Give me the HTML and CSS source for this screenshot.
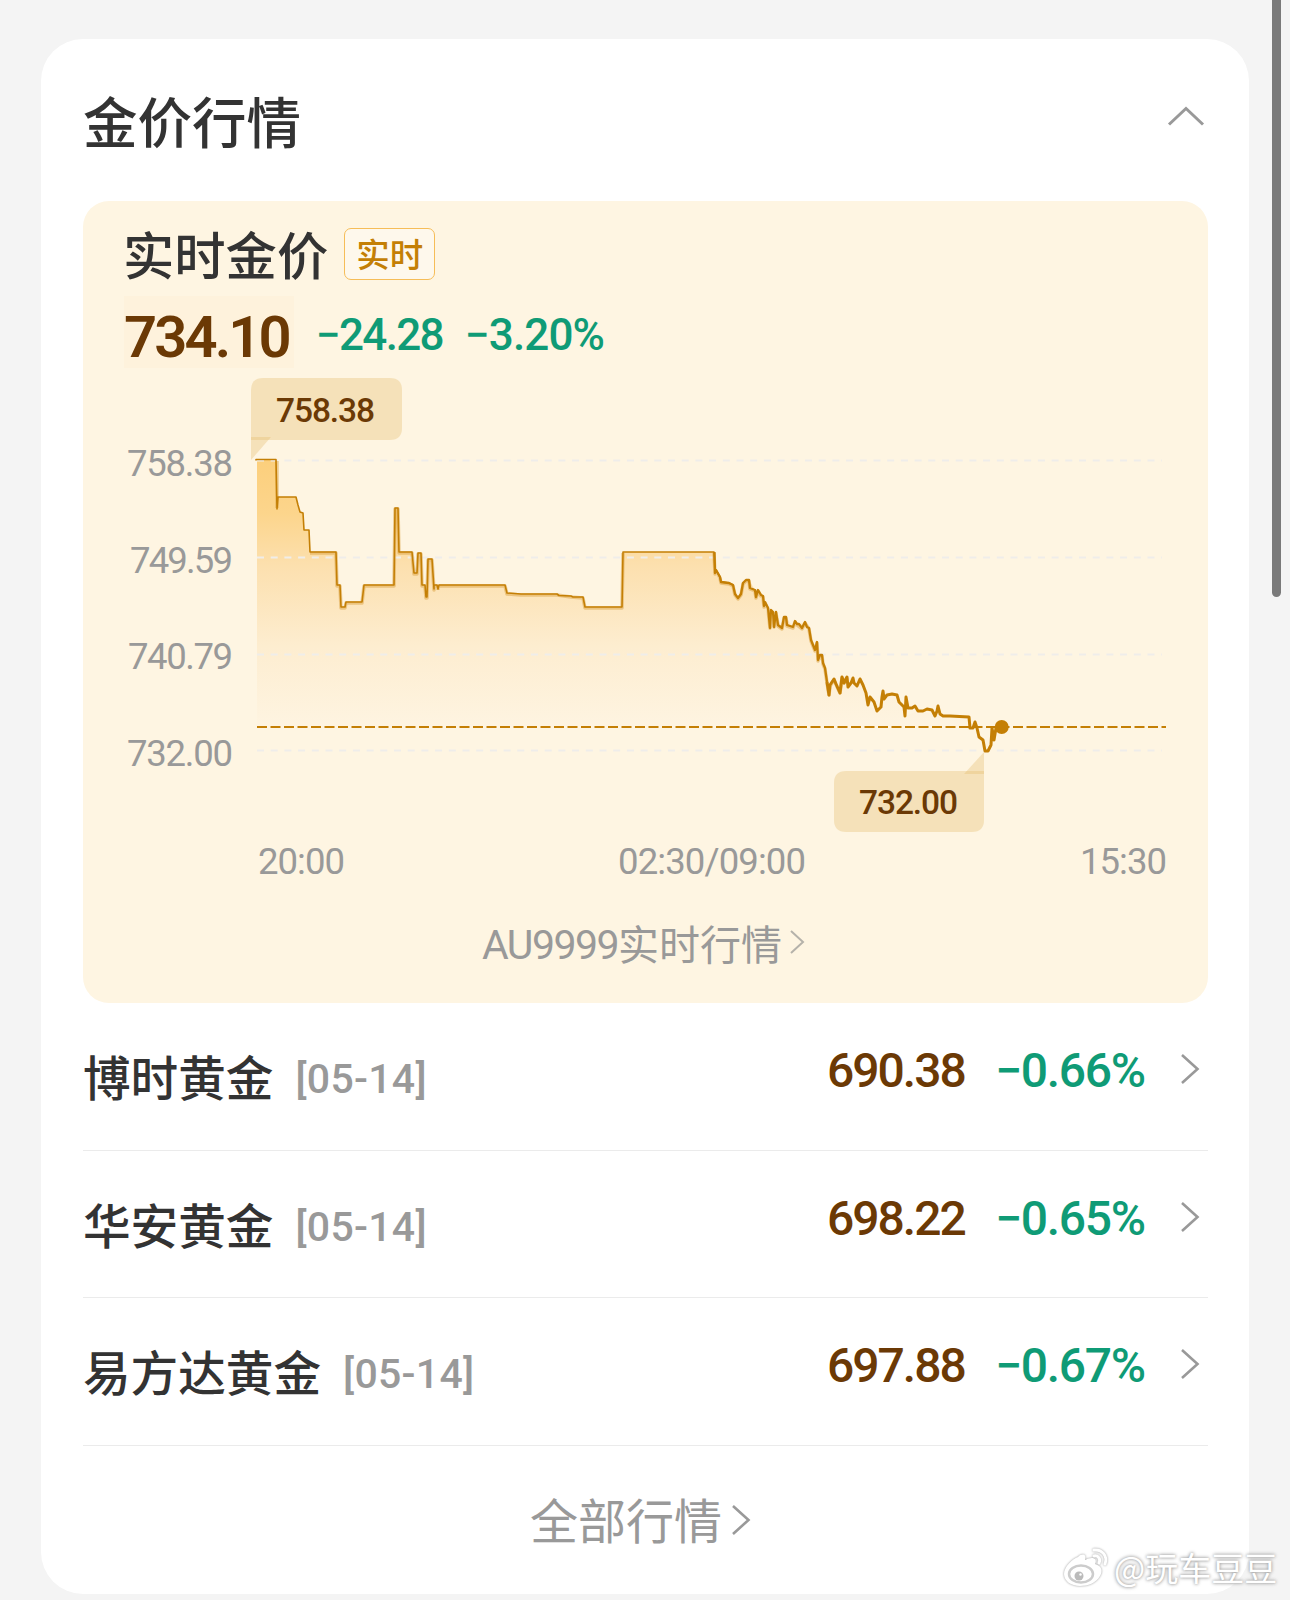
FILE: index.html
```
<!DOCTYPE html>
<html lang="zh-CN">
<head>
    <meta charset="UTF-8">
    <meta name="viewport" content="width=device-width, initial-scale=1.0">
    <title>金价行情</title>
    <link rel="stylesheet" href="styles.css">
</head>
<body>
    <div class="card">
        <div class="card-header">
            <h1>金价行情</h1>
            <svg class="arrow-up" width="40" height="24" viewBox="0 0 40 24">
                <path d="M3 21.500 L20 5.500 L37 21.500"/>
            </svg>
        </div>

        <div class="gold">
            <div class="gold-title">
                <h2>实时金价</h2>
                <span class="tag">实时</span>
            </div>
            <div class="gold-price">
                <span class="now">734.10</span>
                <span class="change">−24.28</span>
                <span class="percent">−3.20%</span>
            </div>

            <svg class="chart" width="1125" height="520" viewBox="83 370 1125 520">
                <defs>
                    <linearGradient id="area" gradientUnits="userSpaceOnUse" x1="0" y1="460" x2="0" y2="727">
                        <stop offset="0" stop-color="#fccf7c"/>
                        <stop offset="0.2" stop-color="#fcd58c"/>
                        <stop offset="0.4" stop-color="#fce0af"/>
                        <stop offset="0.7" stop-color="#fdedd0"/>
                        <stop offset="1" stop-color="#fef4e1"/>
                    </linearGradient>
                </defs>

                <!-- price area -->
                <path fill="url(#area)" d="M257 460 H276 L277 509 L278 497 H296 L300 512 L303 513 L304 530 H309 L310 552 H336 L337 585 H340 L341 607 H345 L346 602 H362 L364 585 H394 L395 508 H398 L399 552 H412 L414 573 H417 L418 553 H421 L422 585 H425 L426 597 L428 559 H432 L434 585 H505 L507 593 L521 594 H557 L571 596 L583 597 L585 607 H622 L623 552 H714 L715 573 L721 582 L733 585 L738 598 L743 583 L749 580 L755 590 L763 596 L770 628 L776 612 L782 628 L786 617 L793 627 L805 622 L811 640 L818 660 L825 668 L829 695 L834 679 L840 693 L842 677 L860 679 L868 705 L877 711 L883 691 L897 695 L905 716 L918 711 L943 716 L969 717 L970 727 H257 Z"/>

                <!-- grid -->
                <g class="grid">
                    <path d="M257 460.5 H1162"/>
                    <path d="M257 557.5 H1162"/>
                    <path d="M257 654.5 H1162"/>
                    <path d="M257 750.5 H1162"/>
                </g>
                <path class="current" d="M257 727 H1166"/>

                <!-- price line -->
                <path class="line-shadow" d="M277 461 V508 M310 553 H336 L337 586 H340 L341 608 H345 L346 603 H362 L364 586 H394 L395 509 H398 L399 553 H412 L414 574 H417 L418 554 H421 L422 586 H425 L426 598 H427 L428 560 H432 L434 590 V586 H438 V590 M439 586 H505 L507 594 L521 595 H557 L571 597 L583 598 L585 608 H622 L623 553 M714 553 L715 574 L716 571 L720 578 L721 583 L729 584 L733 586 L735 595 L738 599 L741 595 L743 584 L746 581 L749 581 L750 589 L755 591 L756 598 L758 591 L761 596 L763 597 L764 607 L765 603 L768 609 L770 628 L771 611 L773 613 L774 627 L776 613 L778 626 L782 629 L784 618 H786 L787 626 L793 628 L795 622 L797 625 L802 629 L805 623 L809 629 L811 641 L815 651 L817 643 L818 661 L820 656 H822 L823 664 L825 669 L827 683 L829 695 L830 686 L834 680 L840 693 L842 678 L844 683 L847 678"/>
                <path class="line" d="M256 460.5 V459.5 H276 L277 509 L278 497 H296 L298 505 L300 512 L303 513 L304 530 H309 L310 552 H336 L337 585 H340 L341 607 H345 L346 602 H362 L364 585 H394 L395 508 H398 L399 552 H412 L414 573 H417 L418 553 H421 L422 585 H425 L426 597 H427 L428 559 H432 L434 589 V585 H437 L438 589 L439 585 H505 L507 593 L521 594 H557 L559 595.5 L571 596 L573 597 H583 L585 607 H622 L623 552 H714 L715 573 L716 570 L720 577 L721 582 L729 583 L733 585"/>
                <path class="line line-bold" d="M714.500 552 L715 573 L716 570 L720 577 L721 582 L729 583 L733 585 L735 594 L738 598 L741 594 L743 583 L746 580 H749 L750 588 L755 590 L756 597 L758 590 L761 595 L763 596 L764 606 L765 602 L768 608 L770 628 L771 610 L773 612 L774 627 L776 612 L778 625 L782 628 L784 617 H786 L787 625 L790 626 L793 627 L795 621 L797 624 L799 624 L802 628 L805 622 L807 627 L809 628 L811 640 L815 650 L817 642 L818 660 L820 655 H822 L823 663 L825 668 L827 682"/>
                <path class="line line-last" d="M827 682 L829 695 L830 685 L834 679 L836 684 L840 693 L842 677 L844 683 L847 677 L848 687 L851 683 L853 678 L854 683 L857 686 L860 679 L863 685 L866 693 L868 705 L870 697 L874 702 L877 711 L881 707 L882 697 L883 691 L884 699 L887 695 L892 694 L897 695 L899 702 L904 707 L905 716 L906 697 L908 708 H912 L915 706 L918 711 H923 L927 709 L932 710 L935 716 L937 711 L938 706 L940 714 L943 716 H950 L969 717 L970 728 H973 L975 722 L977 728 L979 737 L983 740 L985 751 H988 L991 745 L992 728 L994 740 L996 728 H1002"/>
                <circle cx="1001.700" cy="727" r="7" fill="#c47f05"/>

                <!-- high / low bubbles -->
                <g class="bubble">
                    <path d="M263 378 H390 Q402 378 402 390 V428 Q402 440 390 440 H251 V390 Q251 378 263 378 Z"/>
                    <path d="M251 437 H271 L251 460 Z"/>
                    <path d="M846 771 H984 V820 Q984 832 972 832 H846 Q834 832 834 820 V783 Q834 771 846 771 Z"/>
                    <path d="M984 752 V774 H964 Z"/>
                </g>
                <g class="bubble-text">
                    <text x="276" y="422" textLength="99">758.38</text>
                    <text x="859" y="814" textLength="99">732.00</text>
                </g>

                <g class="axis">
                    <text x="127" y="476" textLength="106">758.38</text>
                    <text x="130" y="573" textLength="103">749.59</text>
                    <text x="128" y="669" textLength="105">740.79</text>
                    <text x="127" y="766" textLength="106">732.00</text>
                    <text x="258" y="874" textLength="87">20:00</text>
                    <text x="618" y="874" textLength="188">02:30/09:00</text>
                    <text x="1080" y="874" textLength="87">15:30</text>
                </g>
            </svg>

            <div class="gold-more">
                <span class="code">AU9999</span><span class="cn">实时行情</span>
                <svg width="18" height="28" viewBox="0 0 18 28">
                    <path d="M3 3 L15 14 L3 25"/>
                </svg>
            </div>
        </div>

        <div class="row">
            <span class="name">博时黄金</span>
            <span class="date">[05-14]</span>
            <span class="price">690.38</span>
            <span class="rate">−0.66%</span>
            <svg class="arrow" width="22" height="34" viewBox="0 0 22 34"><path d="M3 3 L18.500 17 L3 31"/></svg>
        </div>
        <div class="row">
            <span class="name">华安黄金</span>
            <span class="date">[05-14]</span>
            <span class="price">698.22</span>
            <span class="rate">−0.65%</span>
            <svg class="arrow" width="22" height="34" viewBox="0 0 22 34"><path d="M3 3 L18.500 17 L3 31"/></svg>
        </div>
        <div class="row">
            <span class="name">易方达黄金</span>
            <span class="date">[05-14]</span>
            <span class="price">697.88</span>
            <span class="rate">−0.67%</span>
            <svg class="arrow" width="22" height="34" viewBox="0 0 22 34"><path d="M3 3 L18.500 17 L3 31"/></svg>
        </div>

        <div class="all">
            <span>全部行情</span>
            <svg class="arrow" width="22" height="34" viewBox="0 0 22 34"><path d="M3 3 L18.500 17 L3 31"/></svg>
        </div>
    </div>

    <div class="scrollbar"></div>

    <div class="watermark">
        <svg width="48" height="42" viewBox="0 0 48 42">
            <path class="eye" d="M16 10 C20 6 25 7 23 13 C30 9 36 11 33 17 C40 19 41 24 38 29 C34 36 26 39 18 39 C9 39 2 34 2 27 C2 20 10 12 16 10 Z"/>
            <path class="wave" d="M32 3 C40 2 46 9 43 17 M32 9 C36 8 39 12 37 16"/>
            <ellipse class="ring" cx="19" cy="27" rx="12" ry="8.500"/>
            <circle class="pupil" cx="17" cy="29" r="4.500"/>
            <circle class="eye" cx="18.500" cy="27.500" r="1.200"/>
        </svg>
        <span>@玩车豆豆</span>
    </div>
</body>
</html>
```
FILE: styles.css
```
body {
    margin: 0;
    padding: 39px 41px 6px;
    height: 1555px;
    overflow: hidden;
    background-color: #f4f4f4;
    color: #333;
    font-family: "Noto Sans CJK SC", sans-serif;
}
h1, h2 {
    margin: 0;
    font-weight: 500;
}
svg {
    display: block;
    fill: none;
}
.card {
    box-sizing: border-box;
    width: 1208px;
    height: 1555px;
    padding: 0 41px 0 42px;
    border-radius: 42px;
    background-color: #fff;
}
.card-header {
    display: flex;
    justify-content: space-between;
    height: 162px;
}
h1 {
    padding-top: 41px;
    font-size: 54.500px;
    line-height: 80px;
}
.arrow-up {
    margin: 64px 2px 0 0;
    stroke: #999;
    stroke-width: 3;
}
.gold {
    display: flex;
    flex-direction: column;
    height: 802px;
    border-radius: 26px;
    background-color: #fef5e2;
}
.gold-title {
    display: flex;
    align-items: center;
    box-sizing: border-box;
    height: 93px;
    padding: 12px 0 0 40px;
}
h2 {
    margin-top: -2px;
    font-size: 51.300px;
    line-height: 76px;
}
.tag {
    box-sizing: border-box;
    width: 91px;
    height: 52px;
    margin: 1px 0 0 16px;
    border: 1px solid #f6bd58;
    border-radius: 7px;
    background-color: #fef8ec;
    color: #c47f05;
    font-size: 33.500px;
    font-weight: 500;
    line-height: 48px;
    text-align: center;
}
.now, .change, .percent, .price, .rate, .date, .code, .chart {
    font-family: Roboto, sans-serif;
}
.gold-price {
    display: flex;
    height: 76px;
    margin-left: 41px;
    line-height: 82px;
    font-weight: 500;
    color: #0f9b76;
}
.now {
    width: 170px;
    height: 72px;
    margin: 2px 22px 0 0;
    background-color: #fef2dc;
    font-size: 58px;
    font-weight: 600;
    letter-spacing: -2.900px;
    color: #6b3905;
}
.change {
    width: 149px;
    font-size: 44px;
    letter-spacing: -1.700px;
}
.percent {
    font-size: 44px;
    letter-spacing: -0.900px;
}
.chart {
    flex: none;
}
.grid path {
    stroke: #efedea;
    stroke-width: 2;
    stroke-dasharray: 7 6.700;
}
.current {
    stroke: #c47f05;
    stroke-width: 2;
    stroke-dasharray: 10 3.500;
}
.line {
    stroke: #c47f05;
    stroke-width: 1.600;
    stroke-linejoin: round;
}
.line-bold {
    stroke-width: 2.300;
}
.line-last {
    stroke-width: 3;
}
.line-shadow {
    stroke: #dba23f;
    stroke-width: 3.500;
    stroke-linejoin: round;
    opacity: 0.5;
}
.bubble path {
    fill: #e3b968;
    fill-opacity: 0.33;
}
.bubble-text text {
    fill: #6b3905;
    font-size: 33.500px;
    font-weight: 500;
}
.axis text {
    fill: #999;
    font-size: 36.500px;
}
.gold-more {
    display: flex;
    justify-content: center;
    align-items: center;
    height: 60px;
    margin-top: 22px;
    padding-right: 3px;
    color: #999;
    font-size: 41px;
    line-height: 60px;
}
.gold-more .code {
    margin-top: 6px;
    letter-spacing: -1.500px;
}
.gold-more svg {
    margin: 0 0 0 6px;
    stroke: #b5b2aa;
    stroke-width: 2;
}
.row {
    display: flex;
    align-items: flex-start;
    box-sizing: border-box;
    height: 147.500px;
    padding-top: 28px;
    border-bottom: 1px solid #ebebeb;
    line-height: 80px;
    white-space: nowrap;
}
.name {
    margin-top: 5px;
    font-size: 47.600px;
    font-weight: 500;
}
.date {
    flex: 1;
    margin: 8px 0 0 22px;
    font-size: 41px;
    font-weight: 500;
    letter-spacing: 0.300px;
    color: #999;
}
.price, .rate {
    font-size: 48px;
    font-weight: 500;
}
.price {
    width: 168px;
    letter-spacing: -2px;
    color: #6b3905;
}
.rate {
    width: 184px;
    letter-spacing: -1.300px;
    color: #0f9b76;
}
.arrow {
    stroke: #999;
    stroke-width: 2.600;
}
.row .arrow {
    margin: 21px 7px 0 0;
}
.all {
    display: flex;
    justify-content: center;
    align-items: center;
    height: 148px;
    padding-right: 9px;
    color: #999;
    font-size: 48px;
}
.all span {
    margin-top: -3px;
}
.all .arrow {
    margin-left: 8px;
}
.scrollbar {
    position: absolute;
    top: -10px;
    right: 9px;
    width: 9px;
    height: 607px;
    border-radius: 5px;
    background-color: #7a7a7a;
}
.watermark {
    position: absolute;
    left: 1062px;
    top: 1540px;
    display: flex;
    align-items: center;
    height: 56px;
    color: #fff;
    font-size: 33px;
    line-height: 50px;
    text-shadow: 0 0 3px #999, 0 0 4px #bbb;
}
.watermark span {
    margin-top: -3px;
}
.watermark svg {
    margin-right: 4px;
    filter: drop-shadow(0 0 1px #999);
}
.eye {
    fill: #fff;
}
.ring {
    fill: #fff;
    stroke: #ccc;
    stroke-width: 2.500;
}
.pupil {
    fill: #bbb;
}
.wave {
    stroke: #fff;
    stroke-width: 3;
    stroke-linecap: round;
}
```
